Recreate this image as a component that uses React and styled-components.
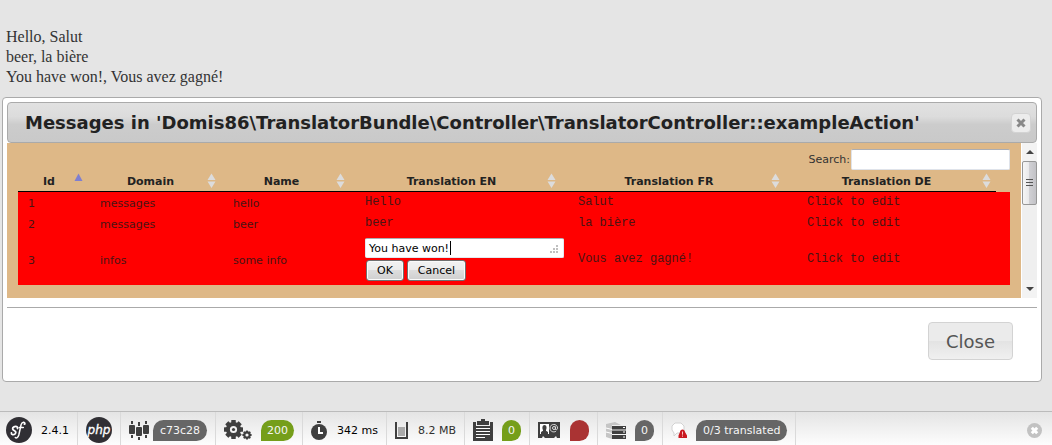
import React from "react";
import styled, { createGlobalStyle, css } from "styled-components";

const SANS = '"DejaVu Sans", Verdana, sans-serif';
const MONO = '"Liberation Mono", "Courier New", monospace';
const SERIF = '"Liberation Serif", "Times New Roman", serif';

const GlobalStyle = createGlobalStyle`
  *, *::before, *::after { box-sizing: border-box; }
  body { margin: 0; background: #e5e5e5; color: #222; }
  button, input, textarea { font-family: inherit; margin: 0; }
`;

const Page = styled.div`
  display: flex;
  flex-direction: column;
  min-height: 100vh;
`;

const Intro = styled.p`
  margin: 0;
  padding: 27px 6px 10px;
  font: 16px/20px ${SERIF};
  color: #333;
`;

const Dialog = styled.section`
  margin: 0 10px 29px 2px;
  padding: 4px;
  border: 1px solid #aaa;
  border-radius: 4px;
  background: #fff;
  font: 11px/15px ${SANS};
`;

const TitleBar = styled.header`
  display: flex;
  align-items: center;
  justify-content: space-between;
  height: 41px;
  padding: 0 5px 0 17px;
  border: 1px solid #aaa;
  border-radius: 4px;
  background: linear-gradient(#e1e1e1, #dcdcdc 35%, #cccccc 55%, #c9c9c9);
`;

const Title = styled.h1`
  margin: 0;
  font-size: 18px;
  line-height: 24px;
  white-space: nowrap;
`;

const TitleClose = styled.button`
  display: grid;
  place-items: center;
  width: 20px;
  height: 20px;
  padding: 0;
  border: 1px solid #d3d3d3;
  border-radius: 4px;
  background: #ececec;
`;

const ScrollPane = styled.div`
  display: flex;
  height: 155px;
`;

const Content = styled.div`
  flex: 1;
  min-width: 0;
  padding: 6px 11px 0;
  background: #deb887;
`;

const SearchRow = styled.div`
  display: flex;
  justify-content: flex-end;
  align-items: center;
  gap: 1px;
  label { color: #333; }
`;

const SearchInput = styled.input`
  width: 159px;
  height: 21px;
  padding: 2px 4px;
  border: 1px solid #dfe3ea;
  border-top-color: #abadb3;
  border-radius: 2px;
  background: #fff;
  font-size: 11px;
`;

const Table = styled.table`
  width: 100%;
  table-layout: fixed;
  border-collapse: separate;
  border-spacing: 0;
`;

const HeadWrap = styled.div`
  padding-right: 14px;
`;

const HeadCell = styled.th`
  position: relative;
  width: ${(p) => p.$share}%;
  height: 22px;
  padding: 1px 18px 0 10px;
  border-bottom: 1px solid #000;
  text-align: center;
  svg { position: absolute; right: 5px; top: 3px; }
`;

const Row = styled.tr`
  height: ${(p) => (p.$editing ? 51 : 21)}px;
  background: #f00;
`;

const Cell = styled.td`
  width: ${(p) => p.$share}%;
  padding: 1px 10px 0;
  line-height: 15px;
  color: #4a1414;
  ${(p) => p.$mono && css`
    padding: 0 10px;
    font-family: ${MONO};
    font-size: 12px;
  `}
`;

const Editor = styled.form`
  font: 11px/15px ${SANS};
`;

const EditBox = styled.div`
  position: relative;
  width: 199px;
  height: 20px;
  svg { position: absolute; right: 5px; bottom: 4px; }
`;

const EditArea = styled.textarea`
  display: block;
  width: 100%;
  height: 100%;
  padding: 2px 3px;
  border: 1px solid #e3e9ef;
  border-top-color: #abadb3;
  border-radius: 2px;
  background: #fff;
  color: #000;
  font-size: 11px;
  line-height: 16px;
  resize: none;
  overflow: hidden;
  outline: none;
  caret-color: transparent;
`;

const Caret = styled.span`
  position: absolute;
  left: 85px;
  top: 3px;
  width: 1px;
  height: 14px;
  background: #000;
`;

const EditButtons = styled.div`
  display: flex;
  gap: 3px;
  padding: 2px 1px 0;
`;

const SmallButton = styled.button`
  height: 21px;
  padding: 0 10px;
  border: 1px solid #707070;
  border-radius: 3px;
  background: linear-gradient(#f2f2f2, #ebebeb 50%, #dddddd 50%, #cfcfcf);
  box-shadow: inset 0 0 0 1px #fafafa;
  color: #000;
  font-size: 11px;
`;

const ScrollBar = styled.div`
  display: flex;
  flex-direction: column;
  width: 16px;
  border-left: 1px solid #fff;
  background: #efefef;
`;

const ScrollArrow = styled.button`
  display: grid;
  place-items: center;
  height: 18px;
  padding: 0;
  border: 0;
  background: #f3f3f3;
`;

const ScrollTrack = styled.div`
  flex: 1;
`;

const ScrollThumb = styled.div`
  display: grid;
  place-items: center;
  height: 44px;
  border: 1px solid #979797;
  border-radius: 2px;
  background: linear-gradient(90deg, #f6f6f6, #e9e9eb 45%, #d0d0d4 50%, #c2c2c6);
`;

const ButtonPane = styled.footer`
  display: flex;
  justify-content: flex-end;
  margin-top: 9px;
  padding: 14px 24px 17px;
  border-top: 1px solid #aaa;
`;

const CloseButton = styled.button`
  height: 38px;
  padding: 0 17px;
  border: 1px solid #d3d3d3;
  border-radius: 4px;
  background: linear-gradient(#ebebeb, #ebebeb 50%, #e3e3e3 50%, #f0f0f0);
  color: #555;
  font-size: 18px;
`;

const Toolbar = styled.footer`
  display: flex;
  height: 34px;
  margin-top: auto;
  border-top: 1px solid #bbb;
  background: linear-gradient(#e4e4e4, #fdfdfd);
  font: 11px/21px ${SANS};
  color: #000;
`;

const ToolItem = styled.div`
  display: flex;
  align-items: center;
  gap: ${(p) => (p.$tight ? 4 : 9)}px;
  padding: 3px 8px 0;
  border-right: 1px solid #dadada;
  white-space: nowrap;
  svg { flex: none; display: block; }
  &:first-child { padding-left: 6px; }
`;

const PILLS = { gray: "#666", green: "#759e1a", red: "#aa3333" };

const Pill = styled.span`
  height: 21px;
  min-width: 19px;
  padding: 0 ${(p) => (p.$wide ? 7 : 6)}px;
  border-radius: 11px 11px 11px 0;
  background: ${(p) => PILLS[p.$tone]};
  color: #f5f5f5;
`;

const ToolText = styled.span`
  color: ${(p) => (p.$muted ? "#2f2f2f" : "#000")};
`;

const HideButton = styled.button`
  align-self: center;
  margin: 4px 10px 0 auto;
  padding: 0;
  border: 0;
  background: none;
  svg { display: block; }
`;

const SortIcon = ({ active }) => (
  <svg width="9" height="16" viewBox="0 0 9 16" aria-hidden="true">
    {active ? (
      <path d="M4.5 0.5 8.5 8h-8z" fill="#7f7fd0" />
    ) : (
      <path d="M4.5 0.5 8.5 7h-8zM0.5 8.5h8l-4 6.5z" fill="#dcdcdc" />
    )}
  </svg>
);

const GripIcon = () => (
  <svg width="9" height="9" viewBox="0 0 9 9" fill="#c0c0c0" aria-hidden="true">
    <path d="M6 0h2v2H6zM3 3h2v2H3zM6 3h2v2H6zM0 6h2v2H0zM3 6h2v2H3zM6 6h2v2H6z" />
  </svg>
);

const SymfonyIcon = () => (
  <svg width="26" height="26" viewBox="0 0 26 26" aria-label="Symfony">
    <circle cx="13" cy="13" r="13" fill="#302f34" />
    <g fill="none" stroke="#fff" strokeLinecap="round">
      <path d="M11.5 11.5c.8-1.8-1.9-2.6-3.6-1.6-2 1.1-1.4 2.7.2 3.6 1.8 1 2.2 2.2 1 3.4-1.5 1.3-4 .9-3.7-.9" strokeWidth="1.8" />
      <path d="M18.8 6.7c.3-2.2-2.8-2.2-3.7.9L12.8 18c-.8 2.7-2.5 3.5-3.5 2.5M13.3 10.5h4" strokeWidth="1.5" />
    </g>
    <circle cx="18.5" cy="7" r="1.1" fill="#fff" />
  </svg>
);

const PhpIcon = () => (
  <svg width="26" height="26" viewBox="0 0 26 26">
    <circle cx="13" cy="13" r="13" fill="#302f34" />
    <text x="13" y="17" textAnchor="middle" fill="#fff" stroke="#fff" strokeWidth="0.3" fontFamily={SANS} fontSize="12" fontStyle="italic">php</text>
  </svg>
);

const ConfigIcon = () => (
  <svg width="20" height="19" viewBox="0 0 20 19" fill="#3f3f3f">
    <rect y="4" width="6" height="9" rx="1" />
    <rect x="7" y="6" width="6" height="9" rx="1" />
    <rect x="14" y="4" width="6" height="9" rx="1" />
    <path d="M2 0h2v3H2zM2 14h2v3H2zM9 1h2v4H9zM9 16h2v3H9zM16 0h2v3h-2zM16 14h2v3h-2z" />
  </svg>
);

const Gear = ({ x, y, r, teeth, width, hole }) => (
  <g transform={`translate(${x} ${y})`}>
    {Array.from({ length: teeth }, (_, i) => (
      <rect key={i} x={-width / 2} y={-r} width={width} height={r / 2} rx="0.5" fill="#3f3f3f" transform={`rotate(${(360 / teeth) * i})`} />
    ))}
    <circle r={(r * 0.8 + hole) / 2} fill="none" stroke="#3f3f3f" strokeWidth={r * 0.8 - hole} />
  </g>
);

const GearsIcon = () => (
  <svg width="28" height="20" viewBox="0 0 28 20">
    <Gear x={9.5} y={9.5} r={9.5} teeth={8} width={4.5} hole={3.6} />
    <circle cx="9.5" cy="9.5" r="1.6" fill="#3f3f3f" />
    <Gear x={23} y={15} r={4.6} teeth={8} width={2} hole={1.6} />
  </svg>
);

const ClockIcon = () => (
  <svg width="17" height="19" viewBox="0 0 17 19">
    <path d="M6 0h4v2H6z" fill="#3f3f3f" />
    <circle cx="8" cy="11" r="8" fill="#3f3f3f" />
    <path d="M8 6v6h4" fill="none" stroke="#fff" strokeWidth="2" />
  </svg>
);

const MemoryIcon = () => (
  <svg width="14" height="18" viewBox="0 0 14 18">
    <path d="M1 1v16h11V1" fill="none" stroke="#3f3f3f" strokeWidth="2" />
    <path d="M3 6h7v9H3z" fill="#aaa" />
  </svg>
);

const ClipboardIcon = () => (
  <svg width="20" height="22" viewBox="0 0 20 22">
    <path d="M0 3h3v4h14V3h3v19H0zM4 2h4V0h4v2h4v4H4z" fill="#3f3f3f" />
    <path d="M3 9.5h14M3 12.5h14M3 15.5h14M3 18.5h9" stroke="#fff" strokeWidth="1" />
  </svg>
);

const ContactIcon = () => (
  <svg width="23" height="16" viewBox="0 0 23 16">
    <path d="M0 0h22v16h-3l-1-2-2 2H7l-2-2-1 2H0z" fill="#3f3f3f" />
    <path d="M2 2h9v10H2z" fill="#fff" />
    <path d="M3 12v-2l2-1.2V8C4 6 4.3 3 6.5 3S9 6 8 8v.8l2 1.2v2z" fill="#3f3f3f" />
    <g fill="none" stroke="#ddd">
      <circle cx="16" cy="6" r="1.5" />
      <path d="M17.5 4.5v3c1.2.8 2-.3 2-1.5 0-4.7-7.5-4.7-7.5 0 0 4 4 4.6 6 3.2" />
    </g>
  </svg>
);

const DatabaseIcon = () => (
  <svg width="20" height="17" viewBox="0 0 20 17">
    <path d="M0 2l9-2 6 3H6v14l-6-2z" fill="#c5c5c5" />
    <path d="M0 6l6 1.5M0 10l6 1.5" stroke="#fff" />
    <path d="M6 4h14v3.5H6zM6 8.5h14v3.5H6zM6 13h14v4H6z" fill="#3f3f3f" />
    <path d="M17 5.5h2M17 10h2M17 15h2" stroke="#fff" />
  </svg>
);

const TranslationIcon = () => (
  <svg width="16" height="16" viewBox="0 0 16 16">
    <path d="M4 1h6l3 3v4l-3 3H6l-3 3v-3L1 8V4z" fill="#fff" stroke="#d2d2d2" strokeLinejoin="round" />
    <path d="M9 10c0-3.5 5-3.5 5 0l2 3.5V16H7.5v-2.5z" fill="#c9181f" />
    <path d="M11.5 9.5v3.2M11.5 13.5v1.2" stroke="#f7c5c5" />
  </svg>
);

const HideIcon = () => (
  <svg width="15" height="15" viewBox="0 0 15 15">
    <circle cx="7.5" cy="7.5" r="7.5" fill="#c2c2c2" />
    <path d="M4.8 4.8l5.4 5.4M10.2 4.8l-5.4 5.4" stroke="#fff" strokeWidth="3" />
  </svg>
);

const columns = [
  { label: "Id", head: 7.16, body: 7.26, active: true },
  { label: "Domain", head: 13.6, body: 13.4 },
  { label: "Name", head: 13.19, body: 13.31 },
  { label: "Translation EN", head: 21.57, body: 21.47 },
  { label: "Translation FR", head: 22.9, body: 23.08 },
  { label: "Translation DE", head: 21.58, body: 21.48 },
];

const messages = [
  ["1", "messages", "hello", "Hello", "Salut", "Click to edit"],
  ["2", "messages", "beer", "beer", "la bière", "Click to edit"],
  ["3", "infos", "some info", null, "Vous avez gagné!", "Click to edit"],
];

const InlineEditor = () => (
  <Editor onSubmit={(e) => e.preventDefault()}>
    <EditBox>
      <EditArea aria-label="Translation EN" defaultValue="You have won!" spellCheck={false} />
      <Caret />
      <GripIcon />
    </EditBox>
    <EditButtons>
      <SmallButton type="submit">OK</SmallButton>
      <SmallButton type="button">Cancel</SmallButton>
    </EditButtons>
  </Editor>
);

export default function App() {
  return (
    <Page>
      <GlobalStyle />
      <Intro>
        Hello, Salut<br />
        beer, la bière<br />
        You have won!, Vous avez gagné!
      </Intro>

      <Dialog role="dialog" aria-labelledby="dialog-title">
        <TitleBar>
          <Title id="dialog-title">
            {"Messages in 'Domis86\\TranslatorBundle\\Controller\\TranslatorController::exampleAction'"}
          </Title>
          <TitleClose type="button" aria-label="Close dialog">
            <svg width="10" height="10" viewBox="0 0 10 10">
              <path d="M1.5 1.5l7 7M8.5 1.5l-7 7" stroke="#888" strokeWidth="3" />
            </svg>
          </TitleClose>
        </TitleBar>

        <ScrollPane>
          <Content>
            <SearchRow>
              <label htmlFor="search">Search:</label>
              <SearchInput id="search" type="text" />
            </SearchRow>
            <HeadWrap>
              <Table>
                <thead>
                  <tr>
                    {columns.map((c) => (
                      <HeadCell key={c.label} $share={c.head} scope="col">
                        {c.label}
                        <SortIcon active={c.active} />
                      </HeadCell>
                    ))}
                  </tr>
                </thead>
              </Table>
            </HeadWrap>
            <Table aria-labelledby="dialog-title">
              <tbody>
                {messages.map((row) => (
                  <Row key={row[0]} $editing={row[3] === null}>
                    {row.map((value, i) =>
                      <Cell key={columns[i].label} $share={columns[i].body} $mono={i > 2}>
                        {value === null ? <InlineEditor /> : value}
                      </Cell>
                    )}
                  </Row>
                ))}
              </tbody>
            </Table>
          </Content>
          <ScrollBar>
            <ScrollArrow type="button" aria-label="Scroll up">
              <svg width="8" height="4" viewBox="0 0 8 4"><path d="M4 0l4 4H0z" fill="#444" /></svg>
            </ScrollArrow>
            <ScrollTrack>
              <ScrollThumb>
                <svg width="7" height="8" viewBox="0 0 7 8">
                  <path d="M0 .5h7M0 3.5h7M0 6.5h7" stroke="#555" />
                </svg>
              </ScrollThumb>
            </ScrollTrack>
            <ScrollArrow type="button" aria-label="Scroll down">
              <svg width="8" height="4" viewBox="0 0 8 4"><path d="M0 0h8L4 4z" fill="#444" /></svg>
            </ScrollArrow>
          </ScrollBar>
        </ScrollPane>

        <ButtonPane>
          <CloseButton type="button">Close</CloseButton>
        </ButtonPane>
      </Dialog>

      <Toolbar>
        <ToolItem><SymfonyIcon /><ToolText>2.4.1</ToolText></ToolItem>
        <ToolItem><PhpIcon /></ToolItem>
        <ToolItem $tight><ConfigIcon /><Pill $tone="gray" $wide>c73c28</Pill></ToolItem>
        <ToolItem><GearsIcon /><Pill $tone="green">200</Pill></ToolItem>
        <ToolItem><ClockIcon /><ToolText>342 ms</ToolText></ToolItem>
        <ToolItem><MemoryIcon /><ToolText $muted>8.2 MB</ToolText></ToolItem>
        <ToolItem><ClipboardIcon /><Pill $tone="green">0</Pill></ToolItem>
        <ToolItem><ContactIcon /><Pill $tone="red" /></ToolItem>
        <ToolItem><DatabaseIcon /><Pill $tone="gray">0</Pill></ToolItem>
        <ToolItem><TranslationIcon /><Pill $tone="gray" $wide>0/3 translated</Pill></ToolItem>
        <HideButton type="button" aria-label="Hide toolbar"><HideIcon /></HideButton>
      </Toolbar>
    </Page>
  );
}
